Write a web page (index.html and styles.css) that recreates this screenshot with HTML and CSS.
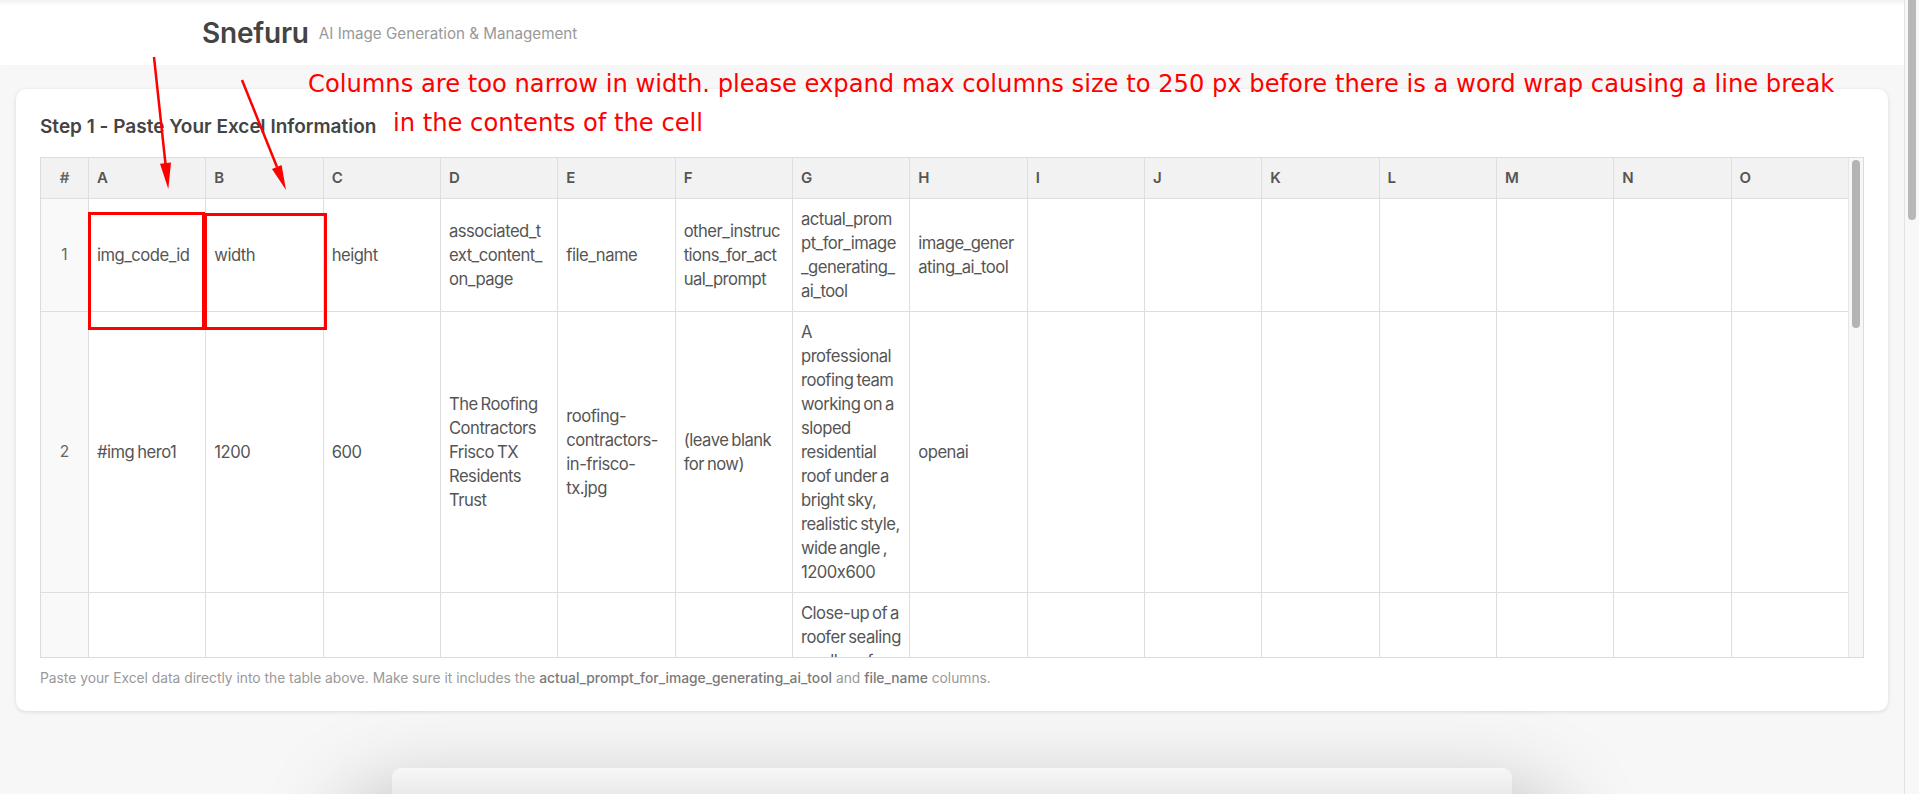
FILE: index.html
```html
<!DOCTYPE html>
<html lang="en">
<head>
<meta charset="utf-8">
<title>Snefuru</title>
<link rel="stylesheet" href="styles.css">
</head>
<body>
<div class="page">
  <header class="topbar">
    <div class="topbar-inner">
      <span class="brand">Snefuru</span>
      <span class="tagline">AI Image Generation &amp; Management</span>
    </div>
  </header>
  <main class="content">
    <section class="card">
      <h2 class="card-title">Step 1 - Paste Your Excel Information</h2>
      <div class="grid-wrap">
        <div class="grid-scroll">
          <table class="grid">
            <colgroup>
              <col class="c-num">
              <col class="c-col"><col class="c-col"><col class="c-col"><col class="c-col"><col class="c-col">
              <col class="c-col"><col class="c-col"><col class="c-col"><col class="c-col"><col class="c-col">
              <col class="c-col"><col class="c-col"><col class="c-col"><col class="c-col"><col class="c-col">
            </colgroup>
            <thead>
              <tr>
                <th class="num">#</th>
                <th>A</th><th>B</th><th>C</th><th>D</th><th>E</th><th>F</th><th>G</th><th>H</th>
                <th>I</th><th>J</th><th>K</th><th>L</th><th>M</th><th>N</th><th>O</th>
              </tr>
            </thead>
            <tbody>
              <tr>
                <td class="num">1</td>
                <td>img_code_id</td>
                <td>width</td>
                <td>height</td>
                <td>associated_text_content_on_page</td>
                <td>file_name</td>
                <td>other_instructions_for_actual_prompt</td>
                <td>actual_prompt_for_image_generating_ai_tool</td>
                <td>image_generating_ai_tool</td>
                <td></td><td></td><td></td><td></td><td></td><td></td><td></td>
              </tr>
              <tr>
                <td class="num">2</td>
                <td>#img hero1</td>
                <td>1200</td>
                <td>600</td>
                <td>The Roofing Contractors Frisco TX Residents Trust</td>
                <td>roofing-contractors-in-frisco-tx.jpg</td>
                <td>(leave blank for now)</td>
                <td>A professional roofing team working on a sloped residential roof under a bright sky, realistic style, wide angle , 1200x600</td>
                <td>openai</td>
                <td></td><td></td><td></td><td></td><td></td><td></td><td></td>
              </tr>
              <tr>
                <td class="num">3</td>
                <td>#img section1</td>
                <td>800</td>
                <td>600</td>
                <td>Expert Roof Repair Services</td>
                <td>roof-repair-frisco.jpg</td>
                <td>(leave blank for now)</td>
                <td>Close-up of a roofer sealing a valley of a shingled roof with flashing tape, detailed hands and tools, realistic style, natural light, 800x600</td>
                <td>openai</td>
                <td></td><td></td><td></td><td></td><td></td><td></td><td></td>
              </tr>
            </tbody>
          </table>
        </div>
        <div class="vscroll"><div class="vscroll-thumb"></div></div>
      </div>
      <p class="hint">Paste your Excel data directly into the table above. Make sure it includes the <strong>actual_prompt_for_image_generating_ai_tool</strong> and <strong>file_name</strong> columns.</p>
    </section>
    <div class="next-card"></div>
  </main>
</div>
<div class="page-scroll"><div class="page-scroll-thumb"></div></div>

<div class="annotation">
  <div class="note note-1">Columns are too narrow in width. please expand max columns size to 250 px before there is a word wrap causing a line break</div>
  <div class="note note-2">in the contents of the cell</div>
  <svg class="marks" width="1919" height="794" viewBox="0 0 1919 794">
    <g stroke="#ff0000" fill="none">
      <line x1="154" y1="57" x2="165.6" y2="165" stroke-width="2.5"/>
      <line x1="242" y1="80" x2="277" y2="167" stroke-width="2.5"/>
      <rect x="89.5" y="213.5" width="114" height="115" stroke-width="3"/>
      <rect x="205.5" y="214.5" width="120" height="114" stroke-width="3"/>
    </g>
    <g fill="#ff0000">
      <polygon points="168.3,189 160,163.8 171,162.6"/>
      <polygon points="286,190 272,169 281.6,165"/>
    </g>
  </svg>
</div>
</body>
</html>
```

FILE: styles.css
```css
* { box-sizing: border-box; }

html, body {
  margin: 0;
  padding: 0;
}

body {
  position: relative;
  width: 1919px;
  height: 794px;
  overflow: hidden;
  display: flex;
  background: #f7f7f7;
  font-family: Inter, "Noto Sans", "Liberation Sans", sans-serif;
  font-feature-settings: "calt" 0;
  color: #555;
}

.page {
  flex: 1;
  min-width: 0;
  display: flex;
  flex-direction: column;
}

/* ---------- top bar ---------- */
.topbar {
  height: 65px;
  flex: none;
  background: #fff;
  box-shadow: inset 0 5px 5px -3px rgba(0, 0, 0, 0.07);
}

.topbar-inner {
  max-width: 1500px;
  height: 100%;
  margin: 0 auto;
  display: flex;
  align-items: center;
  gap: 10px;
}

.brand {
  font-size: 28px;
  font-weight: 600;
  color: #444;
  letter-spacing: -0.2px;
}

.tagline {
  font-size: 15.2px;
  color: #999;
  padding-top: 1px;
}

/* ---------- main ---------- */
.content {
  padding: 24px 16px 0;
  display: flex;
  flex-direction: column;
}

.card {
  background: #fff;
  border-radius: 10px;
  box-shadow: 0 1px 4px rgba(0, 0, 0, 0.12);
  padding: 24px 24px 23px;
}

.card-title {
  margin: 0 0 17px;
  font-size: 19px;
  line-height: 27px;
  font-weight: 600;
  color: #444;
}

.grid-wrap {
  height: 501px;
  border: 1px solid #dcdcdc;
  display: flex;
  overflow: hidden;
}

.grid-scroll {
  flex: 1;
  min-width: 0;
  overflow: hidden;
}

.grid {
  table-layout: fixed;
  border-collapse: separate;
  border-spacing: 0;
  width: 1808px;
  font-size: 16.62px;
  line-height: 24px;
  letter-spacing: -0.5px;
  word-spacing: -1.3px;
  color: #555;
}

.c-num { width: 48px; }
.c-col { width: 117.33px; }

.grid th,
.grid td {
  padding: 8px;
  border-right: 1px solid #dedede;
  border-bottom: 1px solid #dedede;
  text-align: left;
  vertical-align: middle;
  overflow-wrap: anywhere;
}

.grid th {
  background: #f2f2f2;
  font-size: 15px;
  font-weight: 600;
  letter-spacing: normal;
  word-spacing: normal;
  color: #555;
}

.grid td {
  background: #fff;
}

.grid .num {
  text-align: center;
  color: #666;
}

.grid td.num {
  background: #f9f9f9;
  font-size: 15.5px;
  letter-spacing: normal;
}

.vscroll {
  width: 15px;
  flex: none;
  background: #f7f7f7;
  border-left: 1px solid #e6e6e6;
  padding: 2px 0 0 3px;
}

.vscroll-thumb {
  width: 8px;
  height: 168px;
  border-radius: 4px;
  background: #b4b4b4;
}

.hint {
  margin: 10px 0 0;
  font-size: 13.8px;
  line-height: 20px;
  color: #999;
}

.hint strong {
  font-weight: 500;
  color: #7a7a7a;
}

.next-card {
  margin: 57px auto 0;
  width: 1120px;
  height: 90px;
  flex: none;
  border-radius: 10px 10px 0 0;
  background: linear-gradient(#f7f7f7, #e8e8e8 30px);
  box-shadow: 0 70px 90px 40px rgba(0, 0, 0, 0.28);
}

/* ---------- page scrollbar ---------- */
.page-scroll {
  width: 15px;
  flex: none;
  background: #f8f8f8;
  border-left: 1px solid #e3e3e3;
  padding: 0 0 0 3px;
}

.page-scroll-thumb {
  width: 8px;
  height: 220px;
  border-radius: 0 0 4px 4px;
  background: #b8b8b8;
}

/* ---------- annotation overlay ---------- */
.annotation {
  position: absolute;
  inset: 0;
  pointer-events: none;
}

.note {
  position: absolute;
  font-family: "DejaVu Sans", sans-serif;
  font-size: 24.2px;
  line-height: 35px;
  color: #ff0000;
  white-space: nowrap;
}

.note-1 { left: 308px; top: 67px; }
.note-2 { left: 393px; top: 106px; }

.marks {
  position: absolute;
  left: 0;
  top: 0;
}
```
